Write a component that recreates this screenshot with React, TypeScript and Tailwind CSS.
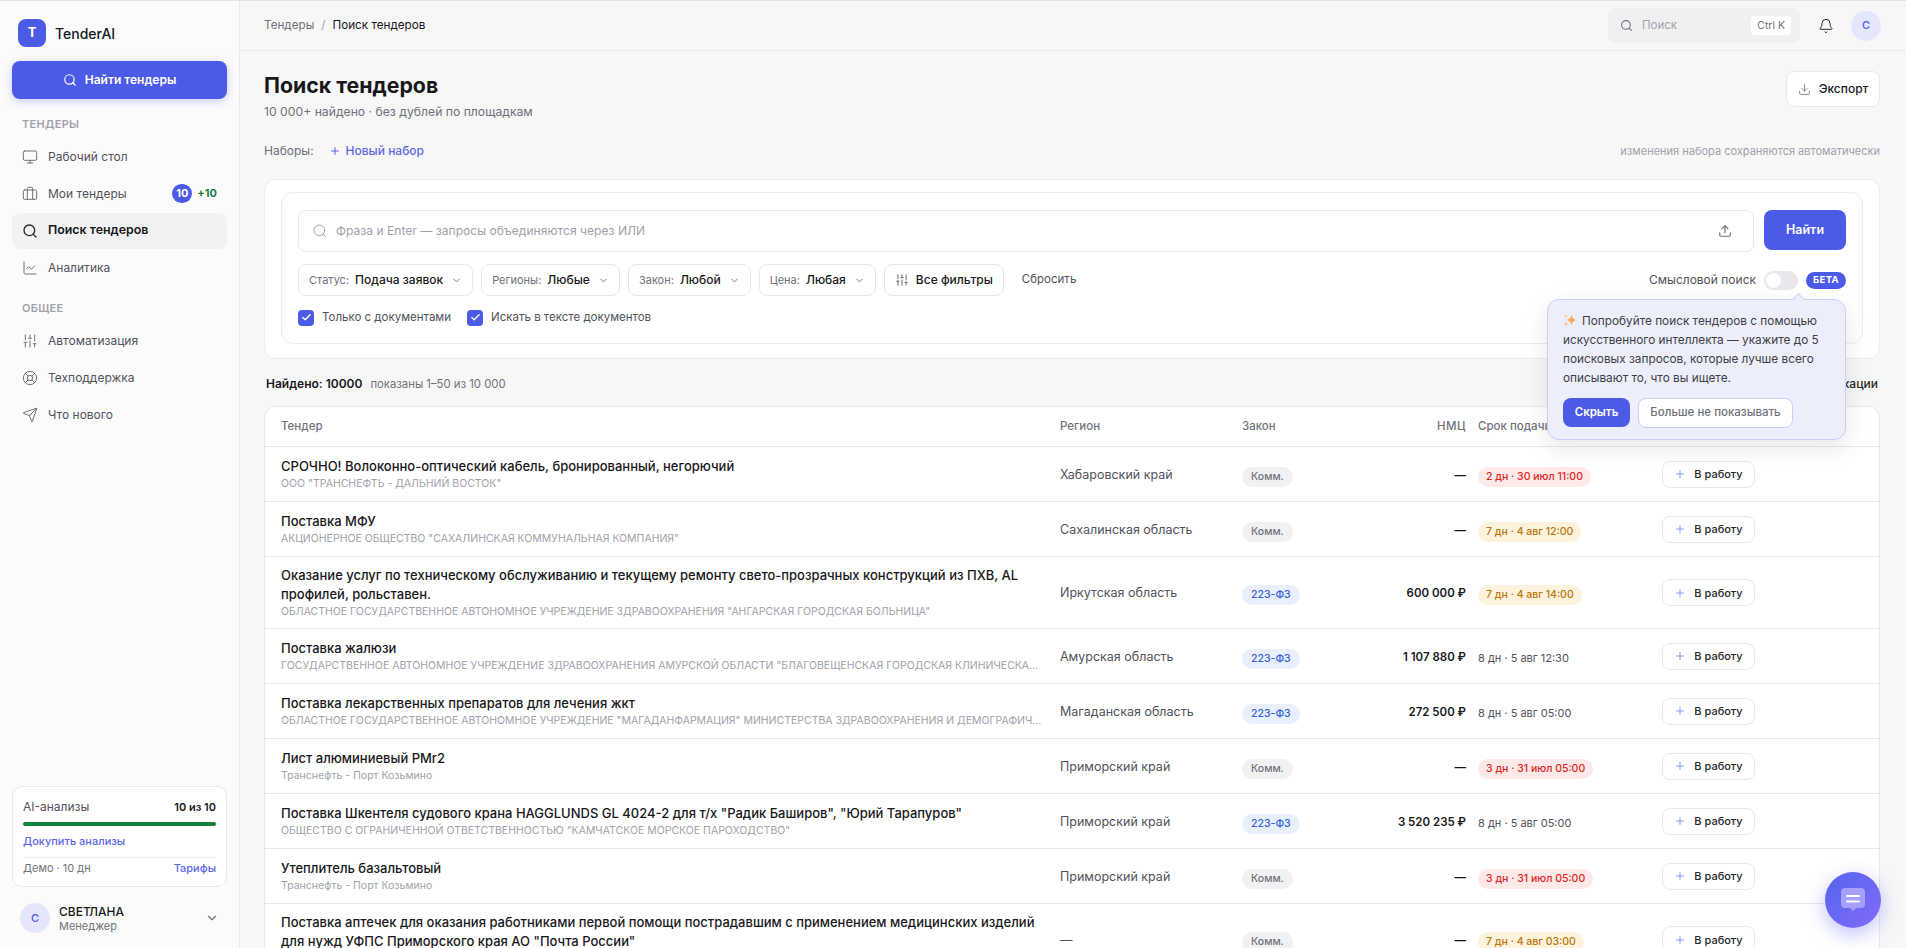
import {
  Bell,
  Briefcase,
  Check,
  ChartLine,
  ChevronDown,
  Download,
  LifeBuoy,
  Monitor,
  Plus,
  Search,
  Send,
  SlidersVertical,
  Upload,
} from 'lucide-react';

type Deadline = 'red' | 'amber' | 'plain';

type Row = {
  title: string;
  org: string;
  region: string;
  law: 'Комм.' | '223-ФЗ';
  price: string;
  deadline: string;
  tone: Deadline;
};

const rows: Row[] = [
  {
    title: 'СРОЧНО! Волоконно-оптический кабель, бронированный, негорючий',
    org: 'ООО "ТРАНСНЕФТЬ - ДАЛЬНИЙ ВОСТОК"',
    region: 'Хабаровский край',
    law: 'Комм.',
    price: '—',
    deadline: '2 дн · 30 июл 11:00',
    tone: 'red',
  },
  {
    title: 'Поставка МФУ',
    org: 'АКЦИОНЕРНОЕ ОБЩЕСТВО "САХАЛИНСКАЯ КОММУНАЛЬНАЯ КОМПАНИЯ"',
    region: 'Сахалинская область',
    law: 'Комм.',
    price: '—',
    deadline: '7 дн · 4 авг 12:00',
    tone: 'amber',
  },
  {
    title: 'Оказание услуг по техническому обслуживанию и текущему ремонту свето-прозрачных конструкций из ПХВ, AL профилей, рольставен.',
    org: 'ОБЛАСТНОЕ ГОСУДАРСТВЕННОЕ АВТОНОМНОЕ УЧРЕЖДЕНИЕ ЗДРАВООХРАНЕНИЯ "АНГАРСКАЯ ГОРОДСКАЯ БОЛЬНИЦА"',
    region: 'Иркутская область',
    law: '223-ФЗ',
    price: '600 000 ₽',
    deadline: '7 дн · 4 авг 14:00',
    tone: 'amber',
  },
  {
    title: 'Поставка жалюзи',
    org: 'ГОСУДАРСТВЕННОЕ АВТОНОМНОЕ УЧРЕЖДЕНИЕ ЗДРАВООХРАНЕНИЯ АМУРСКОЙ ОБЛАСТИ "БЛАГОВЕЩЕНСКАЯ ГОРОДСКАЯ КЛИНИЧЕСКАЯ БОЛЬНИЦА"',
    region: 'Амурская область',
    law: '223-ФЗ',
    price: '1 107 880 ₽',
    deadline: '8 дн · 5 авг 12:30',
    tone: 'plain',
  },
  {
    title: 'Поставка лекарственных препаратов для лечения жкт',
    org: 'ОБЛАСТНОЕ ГОСУДАРСТВЕННОЕ АВТОНОМНОЕ УЧРЕЖДЕНИЕ "МАГАДАНФАРМАЦИЯ" МИНИСТЕРСТВА ЗДРАВООХРАНЕНИЯ И ДЕМОГРАФИЧЕСКОЙ ПОЛИТИКИ',
    region: 'Магаданская область',
    law: '223-ФЗ',
    price: '272 500 ₽',
    deadline: '8 дн · 5 авг 05:00',
    tone: 'plain',
  },
  {
    title: 'Лист алюминиевый PMr2',
    org: 'Транснефть - Порт Козьмино',
    region: 'Приморский край',
    law: 'Комм.',
    price: '—',
    deadline: '3 дн · 31 июл 05:00',
    tone: 'red',
  },
  {
    title: 'Поставка Шкентеля судового крана HAGGLUNDS GL 4024-2 для т/х "Радик Баширов", "Юрий Тарапуров"',
    org: 'ОБЩЕСТВО С ОГРАНИЧЕННОЙ ОТВЕТСТВЕННОСТЬЮ "КАМЧАТСКОЕ МОРСКОЕ ПАРОХОДСТВО"',
    region: 'Приморский край',
    law: '223-ФЗ',
    price: '3 520 235 ₽',
    deadline: '8 дн · 5 авг 05:00',
    tone: 'plain',
  },
  {
    title: 'Утеплитель базальтовый',
    org: 'Транснефть - Порт Козьмино',
    region: 'Приморский край',
    law: 'Комм.',
    price: '—',
    deadline: '3 дн · 31 июл 05:00',
    tone: 'red',
  },
  {
    title: 'Поставка аптечек для оказания работниками первой помощи пострадавшим с применением медицинских изделий для нужд УФПС Приморского края АО "Почта России"',
    org: 'АКЦИОНЕРНОЕ ОБЩЕСТВО "ПОЧТА РОССИИ"',
    region: '—',
    law: 'Комм.',
    price: '—',
    deadline: '7 дн · 4 авг 03:00',
    tone: 'amber',
  },
];

function NavItem({ icon, label, active, children }: { icon: React.ReactNode; label: string; active?: boolean; children?: React.ReactNode }) {
  return (
    <div
      className={
        active
          ? 'flex h-9 items-center gap-[10px] rounded-lg bg-[#f2f2f5] px-[10px] text-[12.4px] font-semibold text-[#18181b]'
          : 'flex h-9 items-center gap-[10px] rounded-lg px-[10px] text-[12px] text-[#52525b]'
      }
    >
      {icon}
      <span>{label}</span>
      {children}
    </div>
  );
}

function Sidebar() {
  return (
    <aside className="flex w-[240px] shrink-0 flex-col border-r border-[#e8e8ec] bg-[#fbfbfc] px-3">
      {/* Logo */}
      <div className="flex items-center gap-[9px] px-[6px] pt-[18px]">
        <div className="flex h-7 w-7 items-center justify-center rounded-lg bg-[#4b5be6] text-[13px] font-bold text-white">T</div>
        <span className="text-[14px] font-medium text-[#18181b]">TenderAI</span>
      </div>
      <button className="mt-[14px] flex h-[38px] items-center justify-center gap-2 rounded-lg bg-[#4b5be6] text-[12px] font-semibold text-white shadow-[0_2px_8px_rgba(75,91,230,0.3)]">
        <Search size={14} strokeWidth={2} />
        Найти тендеры
      </button>

      {/* Nav */}
      <div className="mt-[17px] px-[10px] text-[11px] font-semibold tracking-[0.3px] text-[#a1a1aa]">ТЕНДЕРЫ</div>
      <div className="mt-[6px] flex flex-col gap-px">
        <NavItem icon={<Monitor size={16} strokeWidth={1.5} className="text-[#71717a]" />} label="Рабочий стол" />
        <NavItem icon={<Briefcase size={16} strokeWidth={1.5} className="text-[#71717a]" />} label="Мои тендеры">
          <div className="ml-auto flex items-center gap-[5px]">
            <span className="flex h-[19px] w-5 items-center justify-center rounded-full bg-[#4b5be6] text-[11px] font-bold text-white">10</span>
            <span className="text-[11px] font-bold text-[#15803d]">+10</span>
          </div>
        </NavItem>
        <NavItem icon={<Search size={16} strokeWidth={2} className="text-[#27272a]" />} label="Поиск тендеров" active />
        <NavItem icon={<ChartLine size={16} strokeWidth={1.5} className="text-[#71717a]" />} label="Аналитика" />
      </div>
      <div className="mt-[14px] px-[10px] text-[11px] font-semibold tracking-[0.3px] text-[#a1a1aa]">ОБЩЕЕ</div>
      <div className="mt-[7px] flex flex-col gap-px">
        <NavItem icon={<SlidersVertical size={16} strokeWidth={1.5} className="text-[#71717a]" />} label="Автоматизация" />
        <NavItem icon={<LifeBuoy size={16} strokeWidth={1.5} className="text-[#71717a]" />} label="Техподдержка" />
        <NavItem icon={<Send size={16} strokeWidth={1.5} className="text-[#71717a]" />} label="Что нового" />
      </div>

      {/* AI card */}
      <div className="mt-auto rounded-[10px] border border-[#e8e8ec] bg-white px-[10px] pb-[10px] pt-3">
        <div className="flex items-center justify-between text-[12px] leading-4">
          <span className="text-[#52525b]">AI-анализы</span>
          <span className="text-[11px] font-semibold text-[#18181b]">10 из 10</span>
        </div>
        <div className="mt-[7px] h-1 rounded-full bg-[#15803d]" />
        <div className="mt-[7px] text-[11px] font-medium leading-4 text-[#5b68e8]">Докупить анализы</div>
        <div className="mt-2 flex items-center justify-between border-t border-[#efeff2] pt-[2px] text-[11px] leading-4">
          <span className="text-[#71717a]">Демо · 10 дн</span>
          <span className="font-medium text-[#5b68e8]">Тарифы</span>
        </div>
      </div>

      {/* User */}
      <div className="mb-[15px] mt-4 flex items-center gap-[9px] px-2">
        <div className="flex h-[30px] w-[30px] items-center justify-center rounded-full bg-[#e4e6fb] text-[11px] font-medium text-[#4b5be6]">С</div>
        <div className="flex-1">
          <div className="text-[12px] font-medium leading-[15px] text-[#18181b]">СВЕТЛАНА</div>
          <div className="text-[11px] leading-[14px] text-[#71717a]">Менеджер</div>
        </div>
        <ChevronDown size={14} className="text-[#71717a]" />
      </div>
    </aside>
  );
}

function Topbar() {
  return (
    <header className="flex h-[50px] shrink-0 items-center border-b border-[#e8e8ec] pl-6 pr-[25px]">
      <div className="flex items-center gap-[7px] pt-px text-[11.7px]">
        <span className="text-[#71717a]">Тендеры</span>
        <span className="text-[#a1a1aa]">/</span>
        <span className="text-[#18181b]">Поиск тендеров</span>
      </div>
      <div className="ml-auto flex items-center">
        <div className="flex h-[35px] w-[192px] items-center rounded-lg bg-[#f0f0f3] pl-3 pr-[9px]">
          <Search size={13} className="text-[#71717a]" />
          <span className="ml-[9px] text-[11.5px] text-[#a1a1aa]">Поиск</span>
          <span className="ml-auto rounded bg-white px-[6px] py-[2px] text-[10.5px] leading-[15px] text-[#71717a]">Ctrl K</span>
        </div>
        <Bell size={16} strokeWidth={1.5} className="ml-[18px] text-[#27272a]" />
        <div className="ml-[17px] flex h-[30px] w-[30px] items-center justify-center rounded-full bg-[#e4e6fb] text-[11px] font-medium text-[#4b5be6]">С</div>
      </div>
    </header>
  );
}

function FilterChip({ label, value }: { label: string; value: string }) {
  return (
    <div className="flex h-8 items-center gap-[6px] rounded-lg border border-[#e8e8ec] bg-white px-[10px] text-[12px]">
      <span className="text-[11px] text-[#71717a]">{label}</span>
      <span className="font-medium text-[#18181b]">{value}</span>
      <ChevronDown size={11} className="ml-[2px] text-[#71717a]" />
    </div>
  );
}

function DocCheck({ label }: { label: string }) {
  return (
    <div className="flex items-center gap-2 text-[11.5px] text-[#52525b]">
      <span className="flex h-4 w-4 items-center justify-center rounded-[4px] bg-[#4b5be6]">
        <Check size={11} strokeWidth={3} className="text-white" />
      </span>
      {label}
    </div>
  );
}

function Sparkle() {
  return (
    <svg width="14" height="14" viewBox="0 0 14 14" className="mr-[5px] inline-block align-[-2px]">
      <path d="M8.500 1.500c.6 3.500 1.700 4.700 5.500 5.500-3.800.8-4.900 2-5.500 5.500-.6-3.500-1.700-4.700-5.500-5.500 3.800-.8 4.900-2 5.500-5.500z" fill="#fba84e" />
      <path d="M3 8.500c.3 1.500.8 2 2.500 2.500-1.700.5-2.200 1-2.500 2.500-.3-1.500-.8-2-2.500-2.500 1.700-.5 2.200-1 2.500-2.500z" fill="#fdb6a0" />
      <path d="M3 1c.2 1.200.6 1.600 2 2-1.400.4-1.800.8-2 2-.2-1.200-.6-1.600-2-2 1.400-.4 1.800-.8 2-2z" fill="#fdc78a" />
    </svg>
  );
}

function Popover() {
  return (
    <div className="absolute right-0 top-[28px] z-20 w-[299px] rounded-xl border border-[#c9cef8] bg-[#eceefb] px-[15px] pb-[11px] pt-[12px] shadow-[0_8px_24px_rgba(24,24,27,0.1)]">
      {/* arrow */}
      <div className="absolute -top-[5px] right-[42px] h-[9px] w-[9px] rotate-45 border-l border-t border-[#c9cef8] bg-[#eceefb]" />
      <p className="text-[11.8px] leading-[19px] text-[#3f3f46]">
        <Sparkle />
        Попробуйте поиск тендеров с помощью искусственного интеллекта — укажите до 5 поисковых запросов, которые лучше всего описывают то, что вы ищете.
      </p>
      <div className="mt-[10px] flex items-center gap-2">
        <button className="h-[29px] w-[67px] rounded-lg bg-[#4b5be6] text-[11.5px] font-semibold text-white">Скрыть</button>
        <button className="h-[30px] w-[155px] rounded-lg border border-[#c9cef8] bg-white text-[11.5px] font-medium text-[#71717a]">Больше не показывать</button>
      </div>
    </div>
  );
}

function FilterCard() {
  return (
    <div className="rounded-xl border border-[#ececf0] bg-white px-4 pb-[14px] pt-3">
      <div className="rounded-xl border border-[#ececf0] bg-white px-4 pb-[17px] pt-[17px]">
        {/* Search */}
        <div className="flex gap-[10px]">
          <div className="flex h-[42px] flex-1 items-center rounded-lg border border-[#e8e8ec] pl-[13px] pr-[21px]">
            <Search size={16} strokeWidth={1.5} className="text-[#9ca3af]" />
            <span className="ml-2 text-[12.1px] text-[#a1a1aa]">Фраза и Enter — запросы объединяются через ИЛИ</span>
            <Upload size={14} className="ml-auto text-[#71717a]" />
          </div>
          <button className="h-10 w-[82px] rounded-lg bg-[#4b5be6] text-[12.5px] font-semibold text-white">Найти</button>
        </div>

        {/* Filters */}
        <div className="mt-[12px] flex items-center gap-2">
          <FilterChip label="Статус:" value="Подача заявок" />
          <FilterChip label="Регионы:" value="Любые" />
          <FilterChip label="Закон:" value="Любой" />
          <FilterChip label="Цена:" value="Любая" />
          <div className="flex h-8 items-center gap-[7px] rounded-lg border border-[#e8e8ec] px-[10px] text-[12px] font-medium text-[#18181b]">
            <SlidersVertical size={14} strokeWidth={1.5} className="text-[#52525b]" />
            Все фильтры
          </div>
          <span className="ml-[10px] text-[11.5px] text-[#52525b]">Сбросить</span>

          <div className="relative ml-auto flex items-center gap-2">
            <span className="text-[12px] text-[#52525b]">Смысловой поиск</span>
            <span className="flex h-[19px] w-[34px] items-center rounded-full bg-[#e8e8ec] pl-[2px]">
              <span className="h-[15px] w-[15px] rounded-full bg-white" />
            </span>
            <span className="flex h-[17px] w-10 items-center justify-center rounded-full bg-[#4b5be6] text-[9.5px] font-bold tracking-[0.4px] text-white">БЕТА</span>
            <Popover />
          </div>
        </div>

        {/* Checks */}
        <div className="mt-[13px] flex items-center gap-4">
          <DocCheck label="Только с документами" />
          <DocCheck label="Искать в тексте документов" />
        </div>
      </div>
    </div>
  );
}

function Pill({ law }: { law: Row['law'] }) {
  return law === 'Комм.' ? (
    <span className="inline-flex h-5 items-center rounded-full bg-[#f1f1f4] px-[9px] text-[10.5px] font-medium text-[#71717a]">Комм.</span>
  ) : (
    <span className="inline-flex h-5 items-center rounded-full bg-[#e9effd] px-[9px] text-[10.5px] font-medium text-[#2f62d9]">223-ФЗ</span>
  );
}

function DeadlineCell({ text, tone }: { text: string; tone: Deadline }) {
  if (tone === 'red')
    return <span className="inline-flex h-5 items-center rounded-full bg-[#fde9e8] px-2 text-[10.5px] font-medium text-[#dc2626]">{text}</span>;
  if (tone === 'amber')
    return <span className="inline-flex h-5 items-center rounded-full bg-[#fdf2dc] px-2 text-[10.5px] font-medium text-[#b9770e]">{text}</span>;
  return <span className="text-[11px] text-[#52525b]">{text}</span>;
}

function ResultsTable() {
  return (
    <div className="mt-[13px] rounded-t-xl border border-b-0 border-[#e8e8ec] bg-white">
      <div className="grid h-[40px] grid-cols-[779px_182px_120px_104px_196px_1fr] items-center border-b border-[#e8e8ec] pl-4 text-[11.5px] font-medium text-[#71717a]">
        <span>Тендер</span>
        <span>Регион</span>
        <span>Закон</span>
        <span className="text-right tracking-[0.5px]">НМЦ</span>
        <span className="pl-[12px]">Срок подачи</span>
        <span />
      </div>
      {rows.map((row) => (
        <div key={row.title} className="grid min-h-[55px] grid-cols-[779px_182px_120px_104px_196px_1fr] items-center border-b border-[#e8e8ec] py-[9px] pl-4 last:border-b-0">
          <div className="min-w-0 pr-4">
            <div className="text-[13px] font-medium leading-[19px] text-[#18181b]">{row.title}</div>
            <div className="truncate text-[10.5px] leading-[15px] text-[#a1a1aa]">{row.org}</div>
          </div>
          <div className="mt-[2px] text-[12.5px] text-[#52525b]">{row.region}</div>
          <div>
            <Pill law={row.law} />
          </div>
          <div className="mt-[2px] text-right text-[11.5px] font-semibold text-[#18181b]">{row.price}</div>
          <div className="pl-[12px]">
            <DeadlineCell text={row.deadline} tone={row.tone} />
          </div>
          <div>
            <button className="flex h-[27px] w-[93px] items-center justify-center gap-2 rounded-lg border border-[#e8e8ec] bg-white text-[11px] font-medium text-[#27272a]">
              <Plus size={12} strokeWidth={2} className="text-[#8f98f3]" />
              В работу
            </button>
          </div>
        </div>
      ))}
    </div>
  );
}

export default function App() {
  return (
    <div className="flex h-screen overflow-hidden border-t border-[#e4e4ea] bg-[#f7f7f8] font-['Inter',sans-serif]">
      <Sidebar />
      <main className="flex min-w-0 flex-1 flex-col">
        <Topbar />
        <div className="flex flex-1 flex-col pl-6 pr-[26px]">
          <div className="mt-5 flex items-start justify-between">
            <div>
              <h1 className="text-[21.3px] font-bold leading-7 text-[#18181b]">Поиск тендеров</h1>
              <p className="mt-[5px] text-[12.2px] leading-4 text-[#71717a]">10 000+ найдено · без дублей по площадкам</p>
            </div>
            <button className="flex h-9 w-[94px] items-center justify-center gap-2 rounded-lg border border-[#e8e8ec] bg-white text-[12px] font-medium text-[#18181b]">
              <Download size={13} strokeWidth={1.5} className="text-[#71717a]" />
              Экспорт
            </button>
          </div>

          <div className="mt-[22px] flex items-center text-[12px]">
            <span className="text-[#71717a]">Наборы:</span>
            <Plus size={12} strokeWidth={2} className="ml-[15px] text-[#5b68e8]" />
            <span className="ml-[5px] font-medium text-[#5b68e8]">Новый набор</span>
            <span className="ml-auto text-[11px] text-[#a1a1aa]">изменения набора сохраняются автоматически</span>
          </div>

          <div className="mt-[19px]">
            <FilterCard />
          </div>

          <div className="mt-4 flex items-center px-[2px] text-[12px]">
            <span className="font-semibold text-[#18181b]">Найдено: 10000</span>
            <span className="ml-2 text-[11.3px] text-[#71717a]">показаны 1–50 из 10 000</span>
            <span className="ml-auto font-medium text-[#27272a]">По дате публикации</span>
          </div>

          <ResultsTable />
        </div>
      </main>

      {/* Chat button */}
      <button className="fixed bottom-5 right-[25px] z-30 flex h-14 w-14 items-center justify-center rounded-full bg-linear-to-br from-[#5563ec] to-[#806cfb] shadow-[0_6px_20px_rgba(91,99,238,0.4)]">
        <svg width="24" height="24" viewBox="0 0 24 24">
          <path d="M4 0h16a4 4 0 0 1 4 4v12a4 4 0 0 1-4 4h-5l-3 3-3-3H4a4 4 0 0 1-4-4V4a4 4 0 0 1 4-4z" fill="#a5a0fb" />
          <path d="M6 8h12M6 13.500h12" stroke="#fff" strokeWidth="2" strokeLinecap="round" />
        </svg>
      </button>
    </div>
  );
}
